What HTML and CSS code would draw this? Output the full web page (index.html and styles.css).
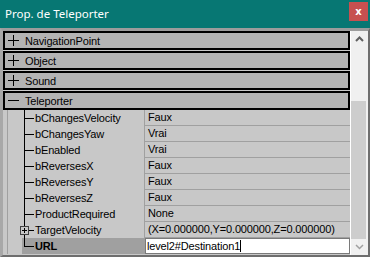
FILE: index.html
```html
<!DOCTYPE html>
<html lang="fr">
<head>
    <meta charset="UTF-8">
    <title>Prop. de Teleporter</title>
    <link rel="stylesheet" href="styles.css">
</head>
<body>
    <div class="window">
        <header class="titlebar">
            <span class="titlebar__text">Prop. de Teleporter</span>
            <button class="titlebar__close">x</button>
        </header>

        <div class="panel">
            <div class="list">
                <div class="cat"><span class="cat__sign plus"></span>NavigationPoint</div>
                <div class="cat"><span class="cat__sign plus"></span>Object</div>
                <div class="cat"><span class="cat__sign plus"></span>Sound</div>
                <div class="cat"><span class="cat__sign"></span>Teleporter</div>

                <div class="props">
                    <div class="prop"><div class="prop__name">bChangesVelocity</div><div class="prop__val">Faux</div></div>
                    <div class="prop"><div class="prop__name">bChangesYaw</div><div class="prop__val">Vrai</div></div>
                    <div class="prop"><div class="prop__name">bEnabled</div><div class="prop__val">Vrai</div></div>
                    <div class="prop"><div class="prop__name">bReversesX</div><div class="prop__val">Faux</div></div>
                    <div class="prop"><div class="prop__name">bReversesY</div><div class="prop__val">Faux</div></div>
                    <div class="prop"><div class="prop__name">bReversesZ</div><div class="prop__val">Faux</div></div>
                    <div class="prop"><div class="prop__name">ProductRequired</div><div class="prop__val">None</div></div>
                    <div class="prop"><div class="prop__name"><span class="expand"></span>TargetVelocity</div><div class="prop__val">(X=0.000000,Y=0.000000,Z=0.000000)</div></div>
                    <div class="prop prop--sel"><div class="prop__name last">URL</div><div class="prop__val prop__val--edit">level2#Destination1<span class="caret"></span></div></div>
                </div>
            </div>

            <div class="scroll">
                <div class="scroll__btn">
                    <svg width="9" height="6" viewBox="0 0 9 6"><path d="M1 5 L4.5 1.5 L8 5" fill="none" stroke="#606060" stroke-width="2"/></svg>
                </div>
                <div class="scroll__track">
                    <div class="scroll__thumb"></div>
                </div>
                <div class="scroll__btn">
                    <svg width="9" height="6" viewBox="0 0 9 6"><path d="M1 1 L4.5 4.5 L8 1" fill="none" stroke="#a0a0a0" stroke-width="1.5"/></svg>
                </div>
            </div>
        </div>
    </div>
</body>
</html>
```

FILE: styles.css
```css
* {
    padding: 0;
    margin: 0;
    box-sizing: border-box;
}

body {
    font-family: 'Liberation Sans', Arial, sans-serif;
    font-size: 11px;
    color: #000;
    background: #f0f0f0;
}

.window {
    width: 370px;
    height: 257px;
    display: flex;
    flex-direction: column;
}

.titlebar {
    height: 28px;
    background: #077773;
    display: flex;
    align-items: center;
    justify-content: space-between;
    padding: 0 2px 0 5px;
    flex-shrink: 0;
}

.titlebar__text {
    font-family: 'Noto Sans', sans-serif;
    font-size: 11.5px;
    color: #fff;
    margin-top: -2px;
}

.titlebar__close {
    width: 19px;
    height: 19px;
    margin-top: -5px;
    border: none;
    background: #c75050;
    color: #fff;
    font-family: 'DejaVu Sans', sans-serif;
    font-weight: bold;
    font-size: 10px;
}

.panel {
    flex: 1;
    display: flex;
    border-top: 3px solid #9c9c9c;
    border-left: 3px solid #a8a8a8;
    border-right: 2px solid #6e6e6e;
    border-bottom: 2px solid #6e6e6e;
    overflow: hidden;
}

.list {
    flex: 1;
    display: flex;
    flex-direction: column;
    gap: 1px;
    background: #c8c8c8;
    border-right: 1px solid #fff;
}

.cat {
    height: 19px;
    background: #b4b4b4;
    border: 2px solid #000;
    display: flex;
    align-items: center;
    padding-left: 3px;
    letter-spacing: -0.15px;
}

.cat__sign {
    position: relative;
    width: 11px;
    height: 11px;
    margin-right: 6px;
}

.cat__sign::before {
    content: '';
    position: absolute;
    left: 0;
    top: 5px;
    width: 11px;
    height: 1px;
    background: #000;
}

.cat__sign.plus::after {
    content: '';
    position: absolute;
    left: 5px;
    top: 0;
    width: 1px;
    height: 11px;
    background: #000;
}

.props {
    display: flex;
    flex-direction: column;
    margin-top: -1px;
    background: linear-gradient(#a0a0a0, #a0a0a0) 4px 0 / 1px 100% no-repeat, #c8c8c8;
}

.prop {
    height: 16px;
    display: flex;
}

.prop__name {
    width: 123px;
    height: 16px;
    margin-left: 19px;
    padding-left: 13px;
    border-right: 1px solid #a0a0a0;
    position: relative;
    line-height: 16px;
    letter-spacing: -0.15px;
}

.prop__name::before {
    content: '';
    position: absolute;
    left: 2px;
    top: 0;
    width: 1px;
    height: 16px;
    background: #000;
}

.prop__name::after {
    content: '';
    position: absolute;
    left: 2px;
    top: 8px;
    width: 10px;
    height: 1px;
    background: #000;
}

.prop__name.last::before {
    height: 9px;
}

.prop__val {
    flex: 1;
    height: 16px;
    padding-left: 3px;
    line-height: 15px;
    border-bottom: 1px solid #a0a0a0;
    letter-spacing: -0.15px;
    white-space: nowrap;
    overflow: hidden;
}

.prop--sel .prop__name {
    background: #a0a0a0;
    font-weight: bold;
}

.prop__val--edit {
    background: #fff;
    border: 1px solid #7a7a7a;
    padding-left: 1px;
    line-height: 14px;
}

.caret {
    display: inline-block;
    width: 1px;
    height: 12px;
    background: #000;
    vertical-align: -2px;
}

.expand {
    position: absolute;
    left: -2px;
    top: 4px;
    width: 9px;
    height: 9px;
    border: 1px solid #404040;
    background: #c8c8c8;
    z-index: 1;
}

.expand::before {
    content: '';
    position: absolute;
    left: 1px;
    top: 3px;
    width: 5px;
    height: 1px;
    background: #000;
}

.expand::after {
    content: '';
    position: absolute;
    left: 3px;
    top: 1px;
    width: 1px;
    height: 5px;
    background: #000;
}

.scroll {
    width: 17px;
    display: flex;
    flex-direction: column;
    background: #f0f0f0;
}

.scroll__btn {
    height: 17px;
    display: flex;
    align-items: center;
    justify-content: center;
}

.scroll__track {
    flex: 1;
    padding-top: 53px;
}

.scroll__thumb {
    width: 15px;
    height: 138px;
    background: #cdcdcd;
}
```
